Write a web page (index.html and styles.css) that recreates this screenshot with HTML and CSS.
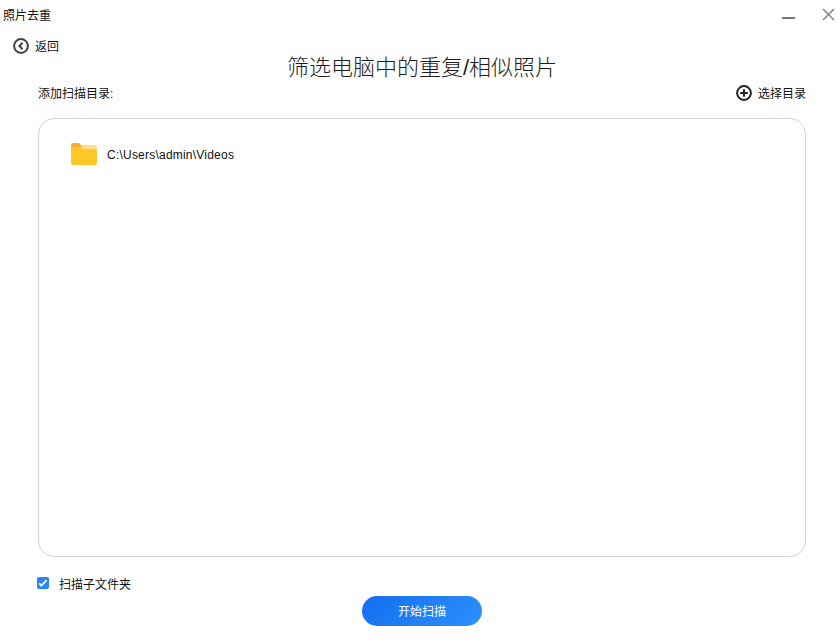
FILE: index.html
```html
<!DOCTYPE html>
<html lang="zh-CN">
<head>
    <meta charset="UTF-8">
    <title>照片去重</title>
    <link rel="stylesheet" href="styles.css">
</head>
<body>
    <div class="app">
        <div class="titlebar">
            <span class="app-name">照片去重</span>
            <div class="win-btns">
                <svg class="win-min" width="13" height="2" viewBox="0 0 13 2"><rect width="13" height="2" fill="#74777e"/></svg>
                <svg class="win-close" width="13" height="13" viewBox="0 0 13 13"><path d="M1 1l11 11M12 1L1 12" stroke="#83868c" stroke-width="1.6" fill="none"/></svg>
            </div>
        </div>

        <div class="back">
            <svg width="16" height="16" viewBox="0 0 16 16"><circle cx="8" cy="8" r="6.9" stroke="#3f4247" stroke-width="2" fill="none"/><path d="M9.6 4.8L6.4 8l3.2 3.2" stroke="#3f4247" stroke-width="2" fill="none"/></svg>
            <span class="back-label">返回</span>
        </div>

        <h1 class="heading">筛选电脑中的重复/相似照片</h1>

        <div class="dir-head">
            <span class="label">添加扫描目录:</span>
            <div class="pick">
                <svg width="16" height="16" viewBox="0 0 16 16"><circle cx="8" cy="8" r="6.9" stroke="#1f2226" stroke-width="2" fill="none"/><path d="M8 4.2v7.6M4.2 8h7.6" stroke="#1f2226" stroke-width="2" fill="none"/></svg>
                <span class="label">选择目录</span>
            </div>
        </div>

        <div class="dir-list">
            <div class="dir-item">
                <svg width="26" height="22" viewBox="0 0 26 22"><path d="M8 2h16a2 2 0 0 1 2 2v4H8z" fill="#ffe08a"/><path d="M0 2a2 2 0 0 1 2-2h6l3.500 4.500H0z" fill="#fbab2d"/><path d="M0 4.500h11.500L13 6h11a2 2 0 0 1 2 2v12a2 2 0 0 1-2 2H2a2 2 0 0 1-2-2z" fill="#ffc727"/></svg>
                <span class="dir-path">C:\Users\admin\Videos</span>
            </div>
        </div>

        <label class="sub-check">
            <span class="box">
                <svg width="12" height="12" viewBox="0 0 12 12"><path d="M2.2 6.300l2.300 2.300 5-5.400" stroke="#fff" stroke-width="1.8" fill="none"/></svg>
            </span>
            <span>扫描子文件夹</span>
        </label>

        <button class="start">开始扫描</button>
    </div>
</body>
</html>
```

FILE: styles.css
```css
body {
    margin: 0;
    background: #fff;
    font-family: "Liberation Sans", "Noto Sans CJK SC", sans-serif;
    font-size: 12px;
    color: #111;
}
.app {
    width: 840px;
    height: 642px;
    display: flex;
    flex-direction: column;
    overflow: hidden;
}
.titlebar {
    height: 28px;
    padding: 0 5px 0 3px;
    display: flex;
    justify-content: space-between;
    align-items: center;
    flex-shrink: 0;
}
.win-btns {
    align-self: flex-start;
    margin-top: 8px;
    display: flex;
    align-items: flex-start;
    gap: 27px;
}
.win-min { margin-top: 9px; }
.label { margin-top: -2px; }
.back {
    height: 16px;
    margin-top: 10px;
    padding-left: 13px;
    display: flex;
    align-items: center;
    gap: 6px;
}
.back-label { margin-top: -1px; }
.heading {
    margin: 1px 0 0;
    height: 24px;
    line-height: 25px;
    font-size: 22px;
    font-weight: 300;
    text-align: center;
    padding-left: 4px;
    color: #1c1c1c;
}
.dir-head {
    margin-top: 4px;
    height: 20px;
    padding: 0 34px 0 38px;
    display: flex;
    justify-content: space-between;
    align-items: center;
}
.pick {
    display: flex;
    align-items: center;
    gap: 6px;
}
.dir-list {
    margin: 15px 34px 0 38px;
    height: 437px;
    border: 1px solid #cdd5e0;
    border-radius: 16px;
}
.dir-item {
    padding: 24px 0 0 32px;
    display: flex;
    align-items: center;
    gap: 10px;
}
.dir-path {
    margin-top: 2px;
    letter-spacing: 0.22px;
}
.sub-check {
    margin-top: 19px;
    height: 14px;
    padding-left: 37px;
    display: flex;
    align-items: center;
    gap: 10px;
}
.box {
    width: 12px;
    height: 12px;
    border-radius: 2px;
    background: #2a85f5;
    display: flex;
}
.start {
    align-self: flex-start;
    margin: 6px 0 0 362px;
    padding: 0 0 2px;
    width: 120px;
    height: 30px;
    border: none;
    border-radius: 15px;
    background: linear-gradient(135deg, #136fef, #2f8ffb);
    color: #fff;
    font-family: inherit;
    font-size: 12px;
}
```
